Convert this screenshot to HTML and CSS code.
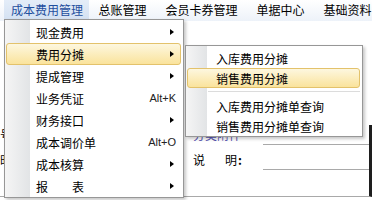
FILE: index.html
```html
<!DOCTYPE html>
<html lang="zh-CN">
<head>
<meta charset="utf-8">
<title>成本费用管理</title>
<link rel="stylesheet" href="styles.css">
</head>
<body>
<div class="app">
  <nav class="menubar">
    <span class="mb-item active">成本费用管理</span>
    <span class="mb-item">总账管理</span>
    <span class="mb-item">会员卡券管理</span>
    <span class="mb-item">单据中心</span>
    <span class="mb-item">基础资料</span>
  </nav>
  <div class="workspace">
    <div class="form">
      <div class="row row1">
        <span class="lbl-left">号</span>
        <span class="lbl-blue">分类附件</span>
        <span class="field"></span>
      </div>
      <div class="row row2">
        <span class="lbl-left">时</span>
        <span class="lbl"><span>说</span><span class="ming">明<b class="colon">:</b></span></span>
        <span class="field"></span>
      </div>
    </div>
  </div>

  <div class="menu main">
    <div class="mi"><span class="t">现金费用</span><i class="arr"></i></div>
    <div class="mi hl"><span class="t">费用分摊</span><i class="arr"></i></div>
    <div class="mi"><span class="t">提成管理</span><i class="arr"></i></div>
    <div class="mi"><span class="t">业务凭证</span><span class="sc">Alt+K</span></div>
    <div class="mi"><span class="t">财务接口</span><i class="arr"></i></div>
    <div class="mi"><span class="t">成本调价单</span><span class="sc">Alt+O</span></div>
    <div class="mi"><span class="t">成本核算</span><i class="arr"></i></div>
    <div class="mi"><span class="t">报　　表</span><i class="arr"></i></div>
  </div>

  <div class="menu sub">
    <div class="mi"><span class="t">入库费用分摊</span></div>
    <div class="mi hl"><span class="t">销售费用分摊</span></div>
    <div class="sep"></div>
    <div class="mi"><span class="t">入库费用分摊单查询</span></div>
    <div class="mi"><span class="t">销售费用分摊单查询</span></div>
  </div>
</div>
</body>
</html>
```

FILE: styles.css
```css
* { box-sizing: border-box; margin: 0; padding: 0; }
html, body { width: 372px; height: 200px; overflow: hidden; background: #fff; }
body {
  font-family: "Noto Sans CJK SC", "Noto Sans", sans-serif;
  font-size: 12px;
  color: #000;
}
.app { position: relative; width: 372px; height: 200px; overflow: hidden; }

.menubar {
  display: flex;
  height: 21px;
  padding-left: 4px;
  background: linear-gradient(#ffffff, #edf2f9);
}
.mb-item {
  padding: 0 9.5px;
  height: 20px;
  line-height: 20px;
  white-space: nowrap;
}
.mb-item.active {
  padding: 0 6px 0 7px;
  background: linear-gradient(#e4edf8, #d4e1f2);
  color: #1f4f9e;
}

.workspace { padding-top: 104px; }
.form {
  height: 72px;
  border-right: 3px solid #1e1e1e;
  border-bottom: 1px solid #a9a9a9;
}
.row {
  display: grid;
  grid-template-columns: 193px 70px 1fr;
  height: 20px;
  line-height: 20px;
}
.row2 { margin-top: 5px; }
.lbl-left { padding-left: 0; }
.lbl-blue { color: #5552b0; white-space: nowrap; }
.lbl { display: flex; white-space: nowrap; }
.ming { margin-left: 20px; }
.colon { margin-left: 1px; font-weight: bold; }
.field { border-bottom: 1px solid #a9a9a9; }

.menu {
  position: absolute;
  border: 1px solid #979797;
  box-shadow: 2px 2px 3px rgba(0, 0, 0, 0.22);
}
.main {
  left: 4px;
  top: 19px;
  width: 180px;
  padding-top: 1px;
  background: linear-gradient(to right, #f5f5f5 0, #e2e4e6 25px, #ffffff 25px);
}
.sub {
  left: 185px;
  top: 45px;
  width: 178px;
  padding-top: 2px;
  background: linear-gradient(to right, #f5f5f5 0, #e2e4e6 21px, #ffffff 21px);
}
.mi {
  display: flex;
  align-items: center;
  height: 22px;
  margin: 0 2px 0 1px;
  padding: 0 6px 0 29px;
  border: 1px solid transparent;
  border-radius: 3px;
  white-space: nowrap;
}
.sub .mi { height: 20px; padding-left: 28px; }
.mi .t { flex: 1; }
.mi.hl {
  border-color: #e3c26b;
  background: linear-gradient(#fdf7df, #fae39c);
}
.arr {
  width: 0;
  height: 0;
  border-left: 4px solid #000;
  border-top: 3.5px solid transparent;
  border-bottom: 3.5px solid transparent;
}
.sc {
  font-family: "Liberation Sans", Arial, sans-serif;
  font-size: 11px;
  color: #222;
  margin-right: -2px;
}
.sep {
  height: 8px;
  margin: 0 2px 0 22px;
  background: linear-gradient(transparent 3px, #dcdcdc 3px, #dcdcdc 4px, #ffffff 4px, #ffffff 5px, transparent 5px);
}
```
